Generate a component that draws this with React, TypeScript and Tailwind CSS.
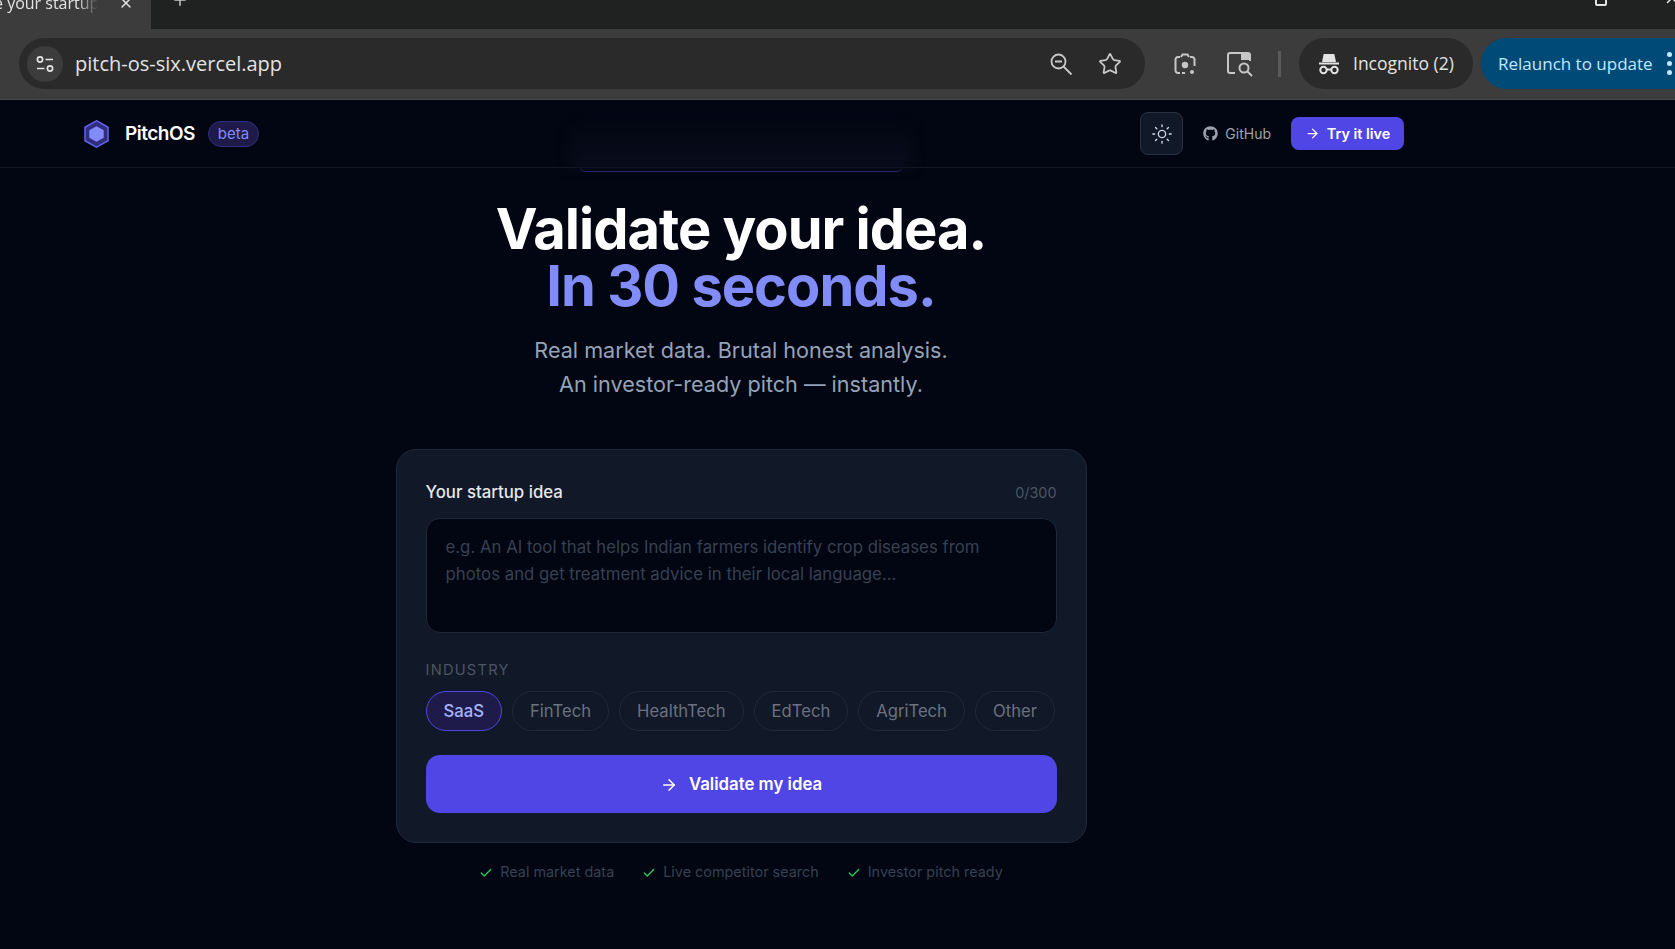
import { ArrowRight, Check, Plus, Star, Sun, X } from 'lucide-react';
import { FaGithub } from 'react-icons/fa';

const industries = ['SaaS', 'FinTech', 'HealthTech', 'EdTech', 'AgriTech', 'Other'];
const perks = ['Real market data', 'Live competitor search', 'Investor pitch ready'];

function SiteInfoIcon() {
  return (
    <svg width="22" height="22" viewBox="0 0 22 22" fill="none" stroke="#e3e3e3" strokeWidth="1.7">
      <circle cx="6" cy="6.5" r="2.6" />
      <path d="M11.5 6.5h7.5M3 15.5h7.5" />
      <circle cx="16" cy="15.5" r="2.6" />
    </svg>
  );
}

function ZoomOutIcon() {
  return (
    <svg width="24" height="24" viewBox="0 0 24 24" fill="none" stroke="#c7c7c7" strokeWidth="1.8">
      <circle cx="9.5" cy="9.5" r="7" />
      <path d="M6 9.5h7M14.5 14.5l8 8" />
    </svg>
  );
}

function LensIcon() {
  return (
    <svg width="24" height="24" viewBox="0 0 24 24" fill="none" stroke="#c7c7c7" strokeWidth="2">
      <path d="M7 5H5a2.5 2.5 0 0 0-2.500 2.500v11A2.500 2.500 0 0 0 5 21h2M17 5h2a2.500 2.500 0 0 1 2.500 2.500V14M8 5l1.500-2.500h5L16 5M12 21H9" />
      <circle cx="12" cy="13" r="3.200" fill="#c7c7c7" stroke="none" />
      <circle cx="19" cy="20" r="2" fill="#c7c7c7" stroke="none" />
    </svg>
  );
}

function ReadingIcon() {
  return (
    <svg width="28" height="26" viewBox="0 0 28 26" fill="none" stroke="#c7c7c7" strokeWidth="2">
      <path d="M9 22H4a2 2 0 0 1-2-2V4a2 2 0 0 1 2-2h18a2 2 0 0 1 2 2v6" />
      <path d="M15 2h9v7h-9z" fill="#c7c7c7" stroke="none" />
      <circle cx="18" cy="17" r="4.500" />
      <path d="M21.500 20.500l4.500 4.500" />
    </svg>
  );
}

function IncognitoIcon() {
  return (
    <svg width="24" height="24" viewBox="0 0 24 24" fill="none" stroke="#e3e3e3" strokeWidth="2">
      <path d="M6 10l1.500-7h9L18 10" fill="#e3e3e3" />
      <path d="M2 11.500h20" />
      <circle cx="6.500" cy="18" r="3.200" />
      <circle cx="17.500" cy="18" r="3.200" />
      <path d="M9.700 17.500h4.600" />
    </svg>
  );
}

function HexLogo() {
  return (
    <svg width="25" height="30" viewBox="0 0 26 30" fill="none" className="ml-[1px]">
      <path d="M13 1.200 25 8v14L13 28.800 1 22V8z" fill="#312e81" stroke="#6366f1" strokeWidth="1.500" />
      <path d="M13 7l7.500 4.200v7.600L13 23l-7.500-4.200v-7.600z" fill="#818cf8" />
    </svg>
  );
}

function BrowserChrome() {
  return (
    <div className="h-[100px] shrink-0 bg-[#3c3c3c] font-['Open_Sans',sans-serif]">
      <div className="flex h-[29px] bg-[#202221]">
        <div className="flex w-[151px] items-center overflow-hidden bg-[#3c3c3c]">
          <span className="ml-[-6px] mt-[-24px] w-[104px] shrink-0 overflow-hidden whitespace-nowrap text-[16px] text-[#e3e3e3] [mask-image:linear-gradient(to_right,black_80%,transparent)]">
            e your startup
          </span>
          <X size={16} color="#e3e3e3" strokeWidth={2.2} className="ml-[20px] mt-[-24px] shrink-0" />
        </div>
        <div className="flex flex-1 rounded-bl-[14px] bg-[#202221]">
          <Plus size={18} color="#c7c7c7" className="ml-[20px] mt-[-9px]" />
          <div className="ml-auto mr-[-2px] flex gap-[56px]">
            <div className="mt-[-6px] h-[12px] w-[12px] rounded-[2px] border-2 border-[#e3e3e3]" />
            <X size={18} color="#e3e3e3" className="mr-[-4px] mt-[-11px]" />
          </div>
        </div>
      </div>
      <div className="flex h-[71px] items-center overflow-hidden border-b border-[#4a4a4a] pb-[1px] pl-[19px]">
        <div className="flex h-[51px] w-[1126px] shrink-0 items-center rounded-full bg-[#2a2a2a] pl-[8px]">
          <div className="flex h-[36px] w-[36px] items-center justify-center rounded-full bg-[#3c3c3c]">
            <SiteInfoIcon />
          </div>
          <span className="ml-[12px] text-[20px] text-[#e3e3e3]">pitch-os-six.vercel.app</span>
          <div className="ml-auto mr-[23px] flex items-center gap-[25px]">
            <ZoomOutIcon />
            <Star size={24} color="#c7c7c7" strokeWidth={1.8} />
          </div>
        </div>
        <div className="ml-[28px] shrink-0"><LensIcon /></div>
        <div className="ml-[29px] shrink-0"><ReadingIcon /></div>
        <div className="ml-[24px] h-[26px] w-[3px] shrink-0 bg-[#5a5a5a]" />
        <div className="ml-[18px] flex h-[51px] w-[174px] shrink-0 items-center rounded-full bg-[#2a2a2a] pl-[18px]">
          <IncognitoIcon />
          <span className="ml-[12px] whitespace-nowrap text-[17.5px] text-[#e3e3e3]">Incognito (2)</span>
        </div>
        <div className="ml-[8px] flex h-[51px] flex-1 items-center whitespace-nowrap rounded-l-full bg-[#004a77] pl-[17px] text-[17px] text-[#c2e7ff]">
          Relaunch to update
          <div className="ml-[14px] flex flex-col gap-[4px]">
            <span className="h-[5px] w-[5px] rounded-full bg-[#c2e7ff]" />
            <span className="h-[5px] w-[5px] rounded-full bg-[#c2e7ff]" />
            <span className="h-[5px] w-[5px] rounded-full bg-[#c2e7ff]" />
          </div>
        </div>
      </div>
    </div>
  );
}

function SiteHeader() {
  return (
    <header className="border-b border-[#141824]">
      <div className="relative flex h-[67px] w-[1482px] items-center pl-[83px] pr-[78px]">
        {/* hero pill scrolled under the blurred nav */}
        <div className="absolute left-[570px] top-[20px] h-[47px] w-[342px] bg-gradient-to-b from-transparent to-[#0b0d1c] blur-[6px]" />
        <div className="absolute left-[580px] top-[67px] h-[5px] w-[322px] rounded-b-[12px] border-b border-[#29246b]" />
        <div className="relative flex flex-1 items-center">
          <HexLogo />
          <span className="ml-[16px] pt-[1px] text-[19px] font-semibold tracking-[-0.5px] text-white">PitchOS</span>
          <span className="ml-[13px] flex h-[26px] w-[51px] items-center justify-center rounded-full border border-[#312e81] bg-[#1e1b4b] pt-[1px] text-[15px] text-[#818cf8]">
            beta
          </span>
          <div className="ml-auto flex items-center">
            <button className="flex h-[43px] w-[43px] items-center justify-center rounded-[8px] border border-[#2a3242] bg-[#111827]">
              <Sun size={22} color="#cbd5e1" strokeWidth={1.5} />
            </button>
            <FaGithub size={15} color="#9ca3af" className="ml-[20px]" />
            <span className="ml-[7px] text-[14px] text-[#9ca3af]">GitHub</span>
            <button className="ml-[20px] flex h-[33px] w-[113px] items-center justify-center gap-[7px] rounded-[8px] bg-[#4f46e5] text-[14.4px] font-semibold text-white">
              <ArrowRight size={15} />
              Try it live
            </button>
          </div>
        </div>
      </div>
    </header>
  );
}

function IdeaCard() {
  return (
    <div className="mt-[48px] w-[691px] rounded-[20px] border border-[#1f2937] bg-[#111827] px-[29px] pb-[29px] pt-[31px]">
      <div className="flex h-[24px] items-center justify-between">
        <label className="text-[16.8px] font-medium text-[#e5e7eb]">Your startup idea</label>
        <span className="text-[14.4px] text-[#4b5563]">0/300</span>
      </div>
      <textarea
        rows={3}
        readOnly
        placeholder="e.g. An AI tool that helps Indian farmers identify crop diseases from photos and get treatment advice in their local language..."
        className="mt-[13px] block h-[115px] w-full resize-none rounded-[14px] border border-[#1f2937] bg-[#020512] px-[19px] py-[15px] text-[16.8px] leading-[27px] outline-none placeholder:text-[#374151]"
      />
      <div className="mt-[27px] text-[14.7px] leading-[20px] tracking-[1.2px] text-[#4b5563]">INDUSTRY</div>
      <div className="mt-[11px] flex gap-[10px]">
        {industries.map((name, i) => (
          <button
            key={name}
            className={
              i === 0
                ? 'h-[40px] rounded-full border border-[#4f46e5] bg-[#1e1b4b] px-[17px] pt-[1px] text-[16.7px] font-medium text-[#a5b4fc]'
                : 'h-[40px] rounded-full border border-[#1f2937] px-[17px] pt-[1px] text-[16.65px] text-[#6b7280]'
            }
          >
            {name}
          </button>
        ))}
      </div>
      <button className="mt-[24px] flex h-[58px] w-full items-center justify-center gap-[11px] rounded-[14px] bg-[#4f46e5] pt-[1px] text-[16.8px] font-semibold text-white">
        <ArrowRight size={18} />
        Validate my idea
      </button>
    </div>
  );
}

export default function App() {
  return (
    <div className="flex h-[949px] flex-col overflow-hidden bg-[#020512] font-['Inter',sans-serif]">
      <BrowserChrome />
      <SiteHeader />
      <main className="flex w-[1482px] flex-col items-center">
        <h1 className="mt-[33px] text-center text-[56px] font-bold leading-[57px] tracking-[-1px] text-white">
          Validate your idea.
          <br />
          <span className="text-[#818cf8]">In 30 seconds.</span>
        </h1>
        <p className="mt-[18px] text-center text-[21.6px] leading-[34px] text-[#94a3b8]">
          Real market data. Brutal honest analysis.
          <br />
          An investor-ready pitch — instantly.
        </p>
        <IdeaCard />
        <div className="mt-[18px] flex gap-[28px] text-[14.4px] text-[#374151]">
          {perks.map((perk) => (
            <span key={perk} className="flex items-center gap-[7px]">
              <Check size={14} color="#22c55e" strokeWidth={2.5} className="mt-[2px]" />
              {perk}
            </span>
          ))}
        </div>
      </main>
    </div>
  );
}
